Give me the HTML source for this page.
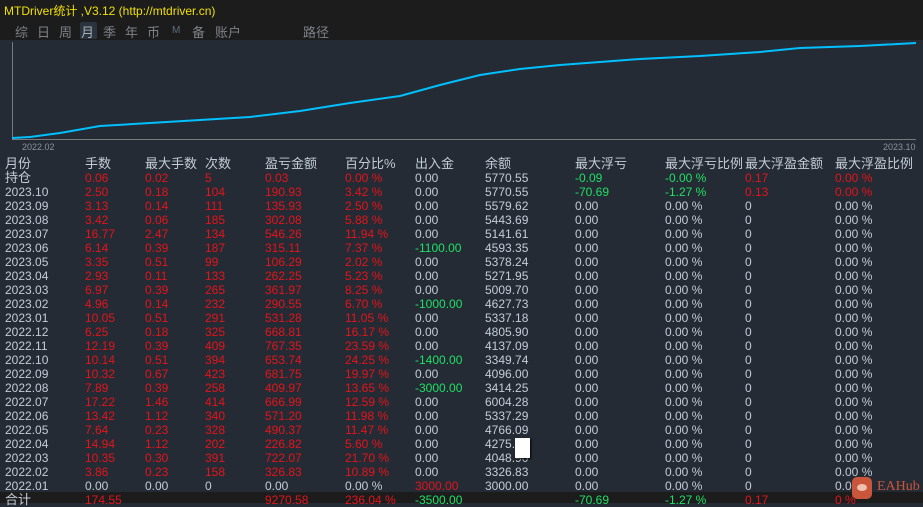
<!DOCTYPE html>
<html><head><meta charset="utf-8"><style>
*{margin:0;padding:0;box-sizing:border-box}
body{width:923px;height:503px;overflow:hidden;background:#252b34;font-family:"Liberation Sans","Noto Sans CJK SC",sans-serif;font-size:12px;color:#c3ccd8;position:relative}
#top{position:absolute;left:0;top:0;width:923px;height:40px;background:#1c1c1c}
#title{position:absolute;left:4px;top:2px;color:#f0e000;font-size:12px}
.tb{position:absolute;top:22px;color:#7d8288;font-size:13px}
.r{position:absolute;left:0;width:923px;height:14px;line-height:14px}
.r span{position:absolute;top:0;white-space:nowrap}
.a{left:5px}.b{left:85px}.c{left:145px}.d{left:205px}.e{left:265px}.f{left:345px}.g{left:415px}.h{left:485px}.i{left:575px}.j{left:665px}.k{left:745px}.l{left:835px}
.R{color:#e3141b}.G{color:#1ee064}
.hd span{font-size:13px}
.cn{font-size:13px}
</style></head><body>
<div id="top"></div>
<div id="title">MTDriver统计 ,V3.12 (http://mtdriver.cn)</div>
<div style="position:absolute;left:80px;top:22px;width:17px;height:17px;background:#2a3440;border-radius:2px"></div>
<span class="tb" style="left:15px">综</span><span class="tb" style="left:37px">日</span><span class="tb" style="left:59px">周</span><span class="tb" style="left:81px;color:#a8adb3">月</span><span class="tb" style="left:103px">季</span><span class="tb" style="left:125px">年</span><span class="tb" style="left:147px">币</span><span class="tb" style="left:172px;font-size:10px;top:25px;color:#5e6e80">M</span><span class="tb" style="left:192px">备</span><span class="tb" style="left:215px">账户</span><span class="tb" style="left:303px">路径</span>
<svg style="position:absolute;left:0;top:40px" width="923" height="112">
<line x1="12.5" y1="2" x2="12.5" y2="100" stroke="#7a7a7a"/>
<line x1="12" y1="99.5" x2="916" y2="99.5" stroke="#7a7a7a"/>
<polyline fill="none" stroke="#00c0ff" stroke-width="2" points="12,98 30,97 60,93 100,86 150,83 200,80 250,77 300,71 350,63 400,56 440,45 480,35 520,29 560,25 600,22 640,19 700,16 760,12 800,8 860,6 916,3"/>
<text x="22" y="110" fill="#8a929c" font-size="9" font-family="Liberation Sans">2022.02</text>
<text x="883" y="110" fill="#8a929c" font-size="9" font-family="Liberation Sans">2023.10</text>
</svg>
<div class="r hd" style="top:157px"><span class="a">月份</span><span class="b">手数</span><span class="c">最大手数</span><span class="d">次数</span><span class="e">盈亏金额</span><span class="f">百分比%</span><span class="g">出入金</span><span class="h">余额</span><span class="i">最大浮亏</span><span class="j">最大浮亏比例</span><span class="k">最大浮盈金额</span><span class="l">最大浮盈比例</span></div>
<div class="r" style="top:171px"><span class="a cn">持仓</span><span class="b R">0.06</span><span class="c R">0.02</span><span class="d R">5</span><span class="e R">0.03</span><span class="f R">0.00 %</span><span class="g">0.00</span><span class="h">5770.55</span><span class="i G">-0.09</span><span class="j G">-0.00 %</span><span class="k R">0.17</span><span class="l R">0.00 %</span></div>
<div class="r" style="top:185px"><span class="a">2023.10</span><span class="b R">2.50</span><span class="c R">0.18</span><span class="d R">104</span><span class="e R">190.93</span><span class="f R">3.42 %</span><span class="g">0.00</span><span class="h">5770.55</span><span class="i G">-70.69</span><span class="j G">-1.27 %</span><span class="k R">0.13</span><span class="l R">0.00 %</span></div>
<div class="r" style="top:199px"><span class="a">2023.09</span><span class="b R">3.13</span><span class="c R">0.14</span><span class="d R">111</span><span class="e R">135.93</span><span class="f R">2.50 %</span><span class="g">0.00</span><span class="h">5579.62</span><span class="i">0.00</span><span class="j">0.00 %</span><span class="k">0</span><span class="l">0.00 %</span></div>
<div class="r" style="top:213px"><span class="a">2023.08</span><span class="b R">3.42</span><span class="c R">0.06</span><span class="d R">185</span><span class="e R">302.08</span><span class="f R">5.88 %</span><span class="g">0.00</span><span class="h">5443.69</span><span class="i">0.00</span><span class="j">0.00 %</span><span class="k">0</span><span class="l">0.00 %</span></div>
<div class="r" style="top:227px"><span class="a">2023.07</span><span class="b R">16.77</span><span class="c R">2.47</span><span class="d R">134</span><span class="e R">546.26</span><span class="f R">11.94 %</span><span class="g">0.00</span><span class="h">5141.61</span><span class="i">0.00</span><span class="j">0.00 %</span><span class="k">0</span><span class="l">0.00 %</span></div>
<div class="r" style="top:241px"><span class="a">2023.06</span><span class="b R">6.14</span><span class="c R">0.39</span><span class="d R">187</span><span class="e R">315.11</span><span class="f R">7.37 %</span><span class="g G">-1100.00</span><span class="h">4593.35</span><span class="i">0.00</span><span class="j">0.00 %</span><span class="k">0</span><span class="l">0.00 %</span></div>
<div class="r" style="top:255px"><span class="a">2023.05</span><span class="b R">3.35</span><span class="c R">0.51</span><span class="d R">99</span><span class="e R">106.29</span><span class="f R">2.02 %</span><span class="g">0.00</span><span class="h">5378.24</span><span class="i">0.00</span><span class="j">0.00 %</span><span class="k">0</span><span class="l">0.00 %</span></div>
<div class="r" style="top:269px"><span class="a">2023.04</span><span class="b R">2.93</span><span class="c R">0.11</span><span class="d R">133</span><span class="e R">262.25</span><span class="f R">5.23 %</span><span class="g">0.00</span><span class="h">5271.95</span><span class="i">0.00</span><span class="j">0.00 %</span><span class="k">0</span><span class="l">0.00 %</span></div>
<div class="r" style="top:283px"><span class="a">2023.03</span><span class="b R">6.97</span><span class="c R">0.39</span><span class="d R">265</span><span class="e R">361.97</span><span class="f R">8.25 %</span><span class="g">0.00</span><span class="h">5009.70</span><span class="i">0.00</span><span class="j">0.00 %</span><span class="k">0</span><span class="l">0.00 %</span></div>
<div class="r" style="top:297px"><span class="a">2023.02</span><span class="b R">4.96</span><span class="c R">0.14</span><span class="d R">232</span><span class="e R">290.55</span><span class="f R">6.70 %</span><span class="g G">-1000.00</span><span class="h">4627.73</span><span class="i">0.00</span><span class="j">0.00 %</span><span class="k">0</span><span class="l">0.00 %</span></div>
<div class="r" style="top:311px"><span class="a">2023.01</span><span class="b R">10.05</span><span class="c R">0.51</span><span class="d R">291</span><span class="e R">531.28</span><span class="f R">11.05 %</span><span class="g">0.00</span><span class="h">5337.18</span><span class="i">0.00</span><span class="j">0.00 %</span><span class="k">0</span><span class="l">0.00 %</span></div>
<div class="r" style="top:325px"><span class="a">2022.12</span><span class="b R">6.25</span><span class="c R">0.18</span><span class="d R">325</span><span class="e R">668.81</span><span class="f R">16.17 %</span><span class="g">0.00</span><span class="h">4805.90</span><span class="i">0.00</span><span class="j">0.00 %</span><span class="k">0</span><span class="l">0.00 %</span></div>
<div class="r" style="top:339px"><span class="a">2022.11</span><span class="b R">12.19</span><span class="c R">0.39</span><span class="d R">409</span><span class="e R">767.35</span><span class="f R">23.59 %</span><span class="g">0.00</span><span class="h">4137.09</span><span class="i">0.00</span><span class="j">0.00 %</span><span class="k">0</span><span class="l">0.00 %</span></div>
<div class="r" style="top:353px"><span class="a">2022.10</span><span class="b R">10.14</span><span class="c R">0.51</span><span class="d R">394</span><span class="e R">653.74</span><span class="f R">24.25 %</span><span class="g G">-1400.00</span><span class="h">3349.74</span><span class="i">0.00</span><span class="j">0.00 %</span><span class="k">0</span><span class="l">0.00 %</span></div>
<div class="r" style="top:367px"><span class="a">2022.09</span><span class="b R">10.32</span><span class="c R">0.67</span><span class="d R">423</span><span class="e R">681.75</span><span class="f R">19.97 %</span><span class="g">0.00</span><span class="h">4096.00</span><span class="i">0.00</span><span class="j">0.00 %</span><span class="k">0</span><span class="l">0.00 %</span></div>
<div class="r" style="top:381px"><span class="a">2022.08</span><span class="b R">7.89</span><span class="c R">0.39</span><span class="d R">258</span><span class="e R">409.97</span><span class="f R">13.65 %</span><span class="g G">-3000.00</span><span class="h">3414.25</span><span class="i">0.00</span><span class="j">0.00 %</span><span class="k">0</span><span class="l">0.00 %</span></div>
<div class="r" style="top:395px"><span class="a">2022.07</span><span class="b R">17.22</span><span class="c R">1.46</span><span class="d R">414</span><span class="e R">666.99</span><span class="f R">12.59 %</span><span class="g">0.00</span><span class="h">6004.28</span><span class="i">0.00</span><span class="j">0.00 %</span><span class="k">0</span><span class="l">0.00 %</span></div>
<div class="r" style="top:409px"><span class="a">2022.06</span><span class="b R">13.42</span><span class="c R">1.12</span><span class="d R">340</span><span class="e R">571.20</span><span class="f R">11.98 %</span><span class="g">0.00</span><span class="h">5337.29</span><span class="i">0.00</span><span class="j">0.00 %</span><span class="k">0</span><span class="l">0.00 %</span></div>
<div class="r" style="top:423px"><span class="a">2022.05</span><span class="b R">7.64</span><span class="c R">0.23</span><span class="d R">328</span><span class="e R">490.37</span><span class="f R">11.47 %</span><span class="g">0.00</span><span class="h">4766.09</span><span class="i">0.00</span><span class="j">0.00 %</span><span class="k">0</span><span class="l">0.00 %</span></div>
<div class="r" style="top:437px"><span class="a">2022.04</span><span class="b R">14.94</span><span class="c R">1.12</span><span class="d R">202</span><span class="e R">226.82</span><span class="f R">5.60 %</span><span class="g">0.00</span><span class="h">4275.70</span><span class="i">0.00</span><span class="j">0.00 %</span><span class="k">0</span><span class="l">0.00 %</span></div>
<div class="r" style="top:451px"><span class="a">2022.03</span><span class="b R">10.35</span><span class="c R">0.30</span><span class="d R">391</span><span class="e R">722.07</span><span class="f R">21.70 %</span><span class="g">0.00</span><span class="h">4048.90</span><span class="i">0.00</span><span class="j">0.00 %</span><span class="k">0</span><span class="l">0.00 %</span></div>
<div class="r" style="top:465px"><span class="a">2022.02</span><span class="b R">3.86</span><span class="c R">0.23</span><span class="d R">158</span><span class="e R">326.83</span><span class="f R">10.89 %</span><span class="g">0.00</span><span class="h">3326.83</span><span class="i">0.00</span><span class="j">0.00 %</span><span class="k">0</span><span class="l">0.00 %</span></div>
<div class="r" style="top:479px"><span class="a">2022.01</span><span class="b">0.00</span><span class="c">0.00</span><span class="d">0</span><span class="e">0.00</span><span class="f">0.00 %</span><span class="g R">3000.00</span><span class="h">3000.00</span><span class="i">0.00</span><span class="j">0.00 %</span><span class="k">0</span><span class="l">0.00 %</span></div>
<div style="position:absolute;left:0;top:492px;width:923px;height:11px;background:#1c1c1c"></div>
<div class="r" style="top:493px"><span class="a" style="font-size:13px">合计</span><span class="b R">174.55</span><span class="e R">9270.58</span><span class="f R">236.04 %</span><span class="g G">-3500.00</span><span class="i G">-70.69</span><span class="j G">-1.27 %</span><span class="k R">0.17</span><span class="l R">0 %</span></div>
<div style="position:absolute;left:515px;top:438px;width:15px;height:20px;background:#fff;box-shadow:1px 1px 2px #000"></div>
<div style="position:absolute;left:852px;top:477px;width:20px;height:22px;background:#c9553a;border-radius:5px"></div>
<div style="position:absolute;left:857px;top:484px;width:10px;height:7px;background:#f0c0b0;border-radius:50%"></div>
<div style="position:absolute;left:877px;top:479px;color:#c9553a;font-family:'Liberation Serif',serif;font-size:14px">EAHub</div>
</body></html>
